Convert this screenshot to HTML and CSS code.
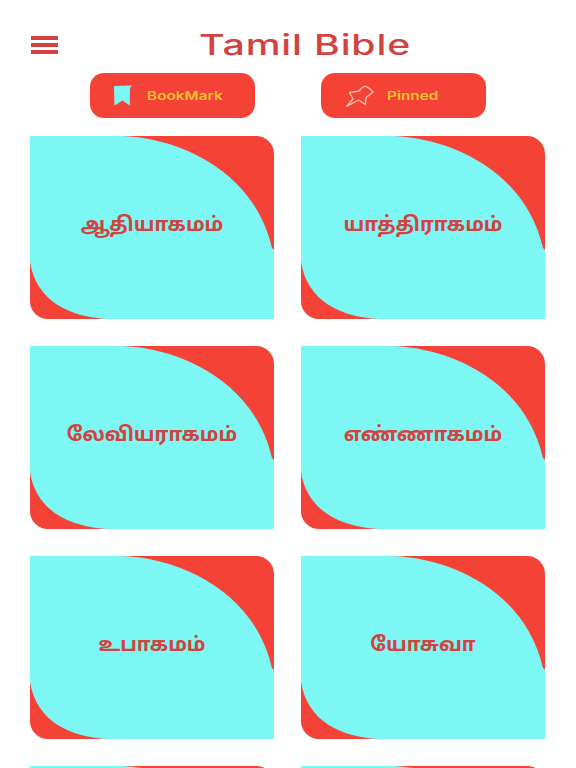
FILE: index.html
```html
<!DOCTYPE html>
<html lang="ta">
<head>
<meta charset="utf-8">
<title>Tamil Bible</title>
<link rel="stylesheet" href="styles.css">
</head>
<body>
<div class="page">
  <header class="topbar">
    <button class="menu" aria-label="Menu"><span></span><span></span><span></span></button>
    <h1 class="title">Tamil Bible</h1>
  </header>
  <nav class="actions">
    <a class="action">
      <svg class="icon-book" viewBox="0 0 22 24"><path d="M1 2 L20 1.500 Q17 2.500 17 5 L16.800 21.500 L9.500 16.500 L1.500 21.500 Z" fill="#7df7f3"/></svg>
      <span class="label">BookMark</span>
    </a>
    <a class="action">
      <svg class="icon-pin" viewBox="0 0 28 22"><path d="M0.500 21.500 L7 14 L3.500 7.500 L13 6 Q16 2 19.300 1.200 Q24 3 27 7.200 L20.300 12.200 L19.300 19.500 L12.500 15 Z" fill="none" stroke="#f7c4b0" stroke-width="1.300" stroke-linejoin="round"/></svg>
      <span class="label">Pinned</span>
    </a>
  </nav>
  <main class="grid">
    <article class="card"><div class="leaf">ஆதியாகமம்</div></article>
    <article class="card"><div class="leaf">யாத்திராகமம்</div></article>
    <article class="card"><div class="leaf">லேவியராகமம்</div></article>
    <article class="card"><div class="leaf">எண்ணாகமம்</div></article>
    <article class="card"><div class="leaf">உபாகமம்</div></article>
    <article class="card"><div class="leaf">யோசுவா</div></article>
    <article class="card"><div class="leaf"></div></article>
    <article class="card"><div class="leaf"></div></article>
  </main>
</div>
</body>
</html>
```
FILE: styles.css
```css
* { box-sizing: border-box; }
html, body { margin: 0; height: 100%; overflow: hidden; background: #fff; }
.page { width: 576px; height: 768px; overflow: hidden; font-family: "Inter", "Liberation Sans", "Noto Sans", sans-serif; }
.topbar { display: flex; align-items: center; height: 73px; padding: 17px 0 0 31px; }
.menu { display: flex; flex-direction: column; gap: 3px; width: 27px; padding: 0; margin: 0; border: 0; background: none; }
.menu span { display: block; height: 4px; background: #d2423e; }
.title { flex: none; margin: 0 0 0 141px; font-size: 28px; line-height: 40px; font-weight: 500; letter-spacing: 0.6px; color: #d2423e; transform: scaleX(1.4); transform-origin: left center; }
.actions { display: flex; gap: 66px; padding-left: 90px; height: 63px; }
.action { display: flex; align-items: center; width: 165px; height: 45px; border-radius: 14px; background: #f44336; color: #fdc02f; font-size: 12px; font-weight: 600; }
.label { transform: scaleX(1.28); transform-origin: left center; }
.icon-book { width: 22px; height: 24px; margin: 0 12px 0 23px; }
.icon-pin { width: 28px; height: 22px; margin: 0 13px 0 25px; }
.grid { display: grid; grid-template-columns: 244px 244px; column-gap: 27px; row-gap: 27px; padding-left: 30px; }
.card { height: 183px; background: #f44336; border-radius: 0 18px 0 18px; overflow: hidden; }
.leaf { display: flex; align-items: center; justify-content: center; height: 100%; padding-bottom: 7px; background: #7df7f3; clip-path: path("M0 0 H93 C155 3 225 38 242 112 L244 114 V183 H77 C40 181 6 165 0 126 Z"); color: #d2423e; font-family: "Noto Sans", "Noto Sans Tamil", "Liberation Serif", sans-serif; font-size: 20px; font-weight: 700; }
```
